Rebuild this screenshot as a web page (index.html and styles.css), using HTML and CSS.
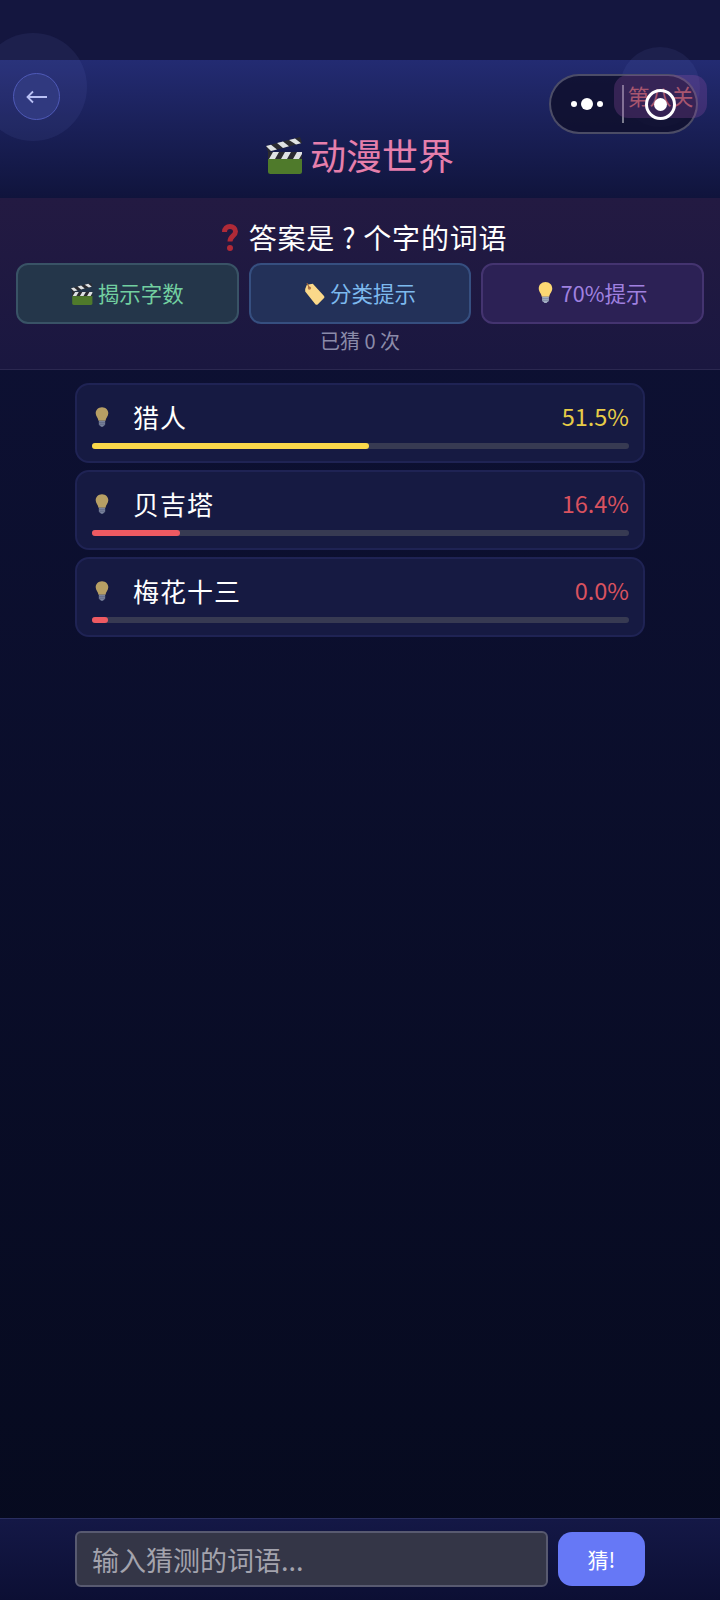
FILE: index.html
```html
<!DOCTYPE html>
<html lang="zh">
<head>
    <title>动漫世界</title>
    <meta name="viewport" content="width=device-width, initial-scale=1.0">
    <link rel="stylesheet" href="styles.css">
</head>
<body>
    <svg class="defs" width="0" height="0">
        <symbol id="clapper" viewBox="0 0 37 37">
            <rect x="2" y="20" width="34" height="17" rx="2.500" fill="#4f7a2b"/>
            <rect x="2" y="15" width="34" height="7" fill="#2b2b30"/>
            <path d="M3 22l4-7h6l-4 7zM15 22l4-7h6l-4 7zM27 22l4-7h5v2l-3 5z" fill="#dfe2e4"/>
            <path d="M0 9L34 0l2 6L2 15z" fill="#2b2b30"/>
            <path d="M0 9l5-1.300 6 4.800-6 1.500zM11 6l6-1.600 6 4.900-6 1.600zM23 3l6-1.600 6 4.800-5 1.300z" fill="#dfe2e4"/>
        </symbol>
        <symbol id="bulb" viewBox="0 0 20 28">
            <path d="M10 0C4.500 0 1 4 1 8.500c0 4.500 3.500 6.500 4 11h10c.5-4.500 4-6.500 4-11C19 4 15.500 0 10 0z" fill="#fcd873"/>
            <path d="M5.500 19.500h9v5c0 1-1 2-2 2l-1 1.500h-3l-1-1.500c-1 0-2-1-2-2z" fill="#a3aec2"/>
            <path d="M5.500 22h9M5.500 24.500h9" stroke="#7c879c" stroke-width="1"/>
        </symbol>
        <symbol id="tag" viewBox="0 0 24 26">
            <path d="M1 7l2-5 7-1 13 14c1 1 1 2 0 3l-7 7c-1 1-2 1-3 0L1 10z" fill="#fbd98a"/>
            <circle cx="6" cy="6" r="2" fill="#b5784a"/>
            <path d="M6 6L3 0" stroke="#a0653a" stroke-width="1.200" fill="none"/>
        </symbol>
        <symbol id="question" viewBox="0 0 20 28">
            <path d="M4.500 9c0-3.500 2.500-5.500 5.500-5.500s5.500 2 5.500 5c0 4.500-5.500 4.500-5.500 10" stroke="#b02a37" stroke-width="5" fill="none"/>
            <circle cx="10" cy="25" r="3" fill="#b02a37"/>
        </symbol>
    </svg>

    <div class="statusbar"></div>

    <header class="header">
        <div class="halo halo-left"></div>
        <div class="halo halo-right"></div>
        <div class="topline">
            <button class="back">
                <svg width="21" height="14" viewBox="0 0 21 14">
                    <path d="M21 7H2M7 1.500L1.500 7 7 12.500" stroke="#b9c0f5" stroke-width="1.800" fill="none"/>
                </svg>
            </button>
            <div class="level">第八关</div>
        </div>
        <h1 class="title">
            <svg class="title-icon"><use href="#clapper"/></svg>
            <span>动漫世界</span>
        </h1>
    </header>

    <div class="capsule">
        <div class="capsule-dots">
            <i class="dot"></i><i class="dot dot-big"></i><i class="dot"></i>
        </div>
        <div class="capsule-line"></div>
        <div class="capsule-ring"><i></i></div>
    </div>

    <section class="hints">
        <h2 class="question">
            <svg class="question-icon"><use href="#question"/></svg>
            <span>答案是 ? 个字的词语</span>
        </h2>
        <div class="hint-btns">
            <div class="hint-btn green"><svg class="btn-clapper"><use href="#clapper"/></svg>揭示字数</div>
            <div class="hint-btn blue"><svg class="btn-tag"><use href="#tag"/></svg>分类提示</div>
            <div class="hint-btn purple"><svg class="btn-bulb"><use href="#bulb"/></svg>70%提示</div>
        </div>
        <div class="count">已猜 0 次</div>
    </section>

    <main class="guesses">
        <div class="guess">
            <div class="guess-top">
                <svg class="guess-bulb"><use href="#bulb"/></svg>
                <span class="guess-name">猎人</span>
                <span class="guess-pct warm">51.5%</span>
            </div>
            <div class="bar"><div class="bar-fill warm-fill" style="width: 51.5%"></div></div>
        </div>
        <div class="guess">
            <div class="guess-top">
                <svg class="guess-bulb"><use href="#bulb"/></svg>
                <span class="guess-name">贝吉塔</span>
                <span class="guess-pct cold">16.4%</span>
            </div>
            <div class="bar"><div class="bar-fill cold-fill" style="width: 16.4%"></div></div>
        </div>
        <div class="guess">
            <div class="guess-top">
                <svg class="guess-bulb"><use href="#bulb"/></svg>
                <span class="guess-name">梅花十三</span>
                <span class="guess-pct cold">0.0%</span>
            </div>
            <div class="bar"><div class="bar-fill cold-fill" style="width: 3%"></div></div>
        </div>
    </main>

    <footer class="inputbar">
        <input class="word" type="text" placeholder="输入猜测的词语...">
        <button class="send">猜!</button>
    </footer>
</body>
</html>
```

FILE: styles.css
```css
* {
    box-sizing: border-box;
}

body {
    margin: 0;
    width: 720px;
    height: 1600px;
    display: flex;
    flex-direction: column;
    position: relative;
    overflow: hidden;
    background: linear-gradient(180deg, #0f1238 0%, #060a1e 100%);
    font-family: "Noto Sans CJK SC", "Noto Sans", sans-serif;
    color: #fff;
}

.defs {
    position: absolute;
}

.statusbar {
    height: 60px;
    background: #14163f;
}

/* header */
.header {
    height: 138px;
    padding: 13px 13px 0;
    background: linear-gradient(180deg, #232b72 0%, #10143c 100%);
}

.halo {
    position: absolute;
    border-radius: 50%;
    background: rgba(120, 130, 220, 0.09);
}

.halo-left {
    left: -21px;
    top: 33px;
    width: 108px;
    height: 108px;
}

.halo-right {
    left: 620px;
    top: 47px;
    width: 80px;
    height: 80px;
}

.topline {
    display: flex;
    justify-content: space-between;
    position: relative;
}

.back {
    width: 47px;
    height: 47px;
    padding: 0;
    display: flex;
    align-items: center;
    justify-content: center;
    border: 1px solid #4f5ab8;
    border-radius: 50%;
    background: #30397f;
}

/* level badge shows over the capsule, ring over the badge */
.level {
    position: relative;
    z-index: 1;
    width: 93px;
    height: 43px;
    margin-top: 2px;
    border-radius: 14px;
    background: rgba(150, 80, 170, 0.27);
    color: #a8566f;
    font-size: 22px;
    line-height: 41px;
    text-align: center;
}

.title {
    margin: 12px 0 0;
    display: flex;
    align-items: center;
    justify-content: center;
    gap: 7px;
    color: #e67fac;
    font-size: 36px;
    font-weight: 400;
    line-height: 44px;
    position: relative;
}

.title-icon {
    width: 37px;
    height: 37px;
    margin-top: 2px;
}

/* wechat capsule, sits over the page */
.capsule {
    position: absolute;
    left: 549px;
    top: 74px;
    width: 149px;
    height: 60px;
    display: flex;
    align-items: center;
    border: 2px solid rgba(255, 255, 255, 0.25);
    border-radius: 30px;
    background: rgba(15, 15, 45, 0.85);
}

.capsule-dots {
    width: 71px;
    display: flex;
    align-items: center;
    justify-content: center;
    gap: 4px;
}

.dot {
    width: 6px;
    height: 6px;
    border-radius: 50%;
    background: #fff;
}

.dot-big {
    width: 12px;
    height: 12px;
}

.capsule-line {
    width: 2px;
    height: 38px;
    background: rgba(255, 255, 255, 0.45);
}

.capsule-ring {
    position: relative;
    z-index: 2;
    width: 31px;
    height: 31px;
    margin-left: 21px;
    display: flex;
    align-items: center;
    justify-content: center;
    border: 3px solid #fff;
    border-radius: 50%;
}

.capsule-ring i {
    width: 13px;
    height: 13px;
    border-radius: 50%;
    background: #fff;
}

/* hints */
.hints {
    height: 172px;
    padding: 19px 16px 0;
    border-bottom: 1px solid #2b2850;
    background: linear-gradient(180deg, #231a42 0%, #1a1740 100%);
}

.question {
    margin: 0 0 0 7px;
    display: flex;
    align-items: center;
    justify-content: center;
    gap: 9px;
    font-size: 28px;
    font-weight: 400;
    letter-spacing: 0.8px;
    line-height: 40px;
}

.question-icon {
    width: 20px;
    height: 28px;
}

.hint-btns {
    margin-top: 6px;
    display: grid;
    grid-template-columns: repeat(3, 1fr);
    gap: 10px;
}

.hint-btn {
    height: 61px;
    padding-bottom: 3px;
    display: flex;
    align-items: center;
    justify-content: center;
    gap: 5px;
    border: 2px solid;
    border-radius: 12px;
    font-size: 21.5px;
}

.green {
    background: #24364a;
    border-color: #395366;
    color: #72cfa0;
}

.blue {
    background: #233159;
    border-color: #364f80;
    color: #7db9ee;
}

.purple {
    background: #2c2155;
    border-color: #443470;
    color: #a081e0;
}

.btn-clapper {
    width: 22px;
    height: 22px;
    margin-top: 3px;
}

.btn-tag {
    width: 21px;
    height: 22px;
    margin-top: 4px;
}

.btn-bulb {
    width: 15px;
    height: 21px;
    margin-right: 3px;
}

.count {
    margin-top: 4px;
    color: #8b8ba9;
    font-size: 20px;
    line-height: 26px;
    text-align: center;
}

/* guesses */
.guesses {
    flex: 1;
    padding: 13px 75px 0;
    display: flex;
    flex-direction: column;
    gap: 7px;
}

.guess {
    height: 80px;
    padding: 12px 14px 0 15px;
    border: 2px solid #1f2354;
    border-radius: 14px;
    background: #161a42;
}

.guess-top {
    height: 38px;
    display: flex;
    align-items: center;
}

.guess-bulb {
    width: 14px;
    height: 20px;
    margin: 2px 0 0 3px;
    opacity: 0.7;
}

.guess-name {
    flex: 1;
    margin-left: 24px;
    font-size: 26px;
    letter-spacing: 1px;
}

.guess-pct {
    font-size: 23.5px;
}

.warm {
    color: #e7cc47;
}

.cold {
    color: #d9525f;
}

.bar {
    height: 6px;
    margin-top: 8px;
    border-radius: 3px;
    background: #373a52;
}

.bar-fill {
    height: 100%;
    border-radius: 3px;
}

.warm-fill {
    background: #fbd84a;
}

.cold-fill {
    background: #ee5a62;
}

/* bottom input */
.inputbar {
    height: 82px;
    padding: 12px 75px 0;
    display: flex;
    gap: 10px;
    border-top: 1px solid #2a2e60;
    background: linear-gradient(180deg, #141846 0%, #0c0f34 100%);
}

.word {
    width: 473px;
    height: 56px;
    padding: 0 15px;
    border: 2px solid #585a70;
    border-radius: 6px;
    background: #343647;
    color: #fff;
    font-family: inherit;
    font-size: 27px;
}

.word::placeholder {
    color: #a3a3ad;
    opacity: 1;
}

.send {
    width: 87px;
    height: 54px;
    margin-top: 1px;
    border: none;
    border-radius: 14px;
    background: #6678f6;
    color: #fff;
    font-family: inherit;
    font-size: 21px;
}
```
